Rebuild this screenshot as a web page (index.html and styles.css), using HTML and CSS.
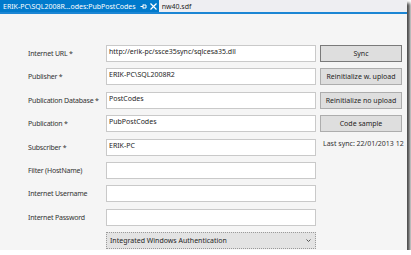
FILE: index.html
```html
<!DOCTYPE html>
<html lang="en">
<head>
    <meta charset="UTF-8">
    <title>Sync settings</title>
    <link rel="stylesheet" href="styles.css">
</head>
<body>
    <div class="window">
        <div class="tabbar">
            <div class="tab active">
                <span class="tab-title">ERIK-PC\SQL2008R...odes:PubPostCodes</span>
                <svg class="tab-icon" width="7" height="7" viewBox="0 0 7 7">
                    <path d="M0.5 3.5H3 M3 1.5V5.5 M3 2H6V5H3" stroke="#fff" stroke-width="1" fill="none"/>
                </svg>
                <svg class="tab-icon" width="7" height="7" viewBox="0 0 7 7">
                    <path d="M0.5 0.5L6.5 6.5 M6.5 0.5L0.5 6.5" stroke="#fff" stroke-width="1.2"/>
                </svg>
            </div>
            <div class="tab">nw40.sdf</div>
        </div>

        <div class="content">
            <div class="form">
                <label>Internet URL *</label>
                <div class="field">http://erik-pc/ssce35sync/sqlcesa35.dll</div>
                <button class="btn default">Sync</button>

                <label>Publisher *</label>
                <div class="field">ERIK-PC\SQL2008R2</div>
                <button class="btn">Reinitialize w. upload</button>

                <label>Publication Database *</label>
                <div class="field">PostCodes</div>
                <button class="btn">Reinitialize no upload</button>

                <label>Publication *</label>
                <div class="field">PubPostCodes</div>
                <button class="btn">Code sample</button>

                <label>Subscriber *</label>
                <div class="field">ERIK-PC</div>
                <div class="status">Last sync: 22/01/2013 12</div>

                <label>Filter (HostName)</label>
                <div class="field"></div>
                <div></div>

                <label>Internet Username</label>
                <div class="field"></div>
                <div></div>

                <label>Internet Password</label>
                <div class="field"></div>
                <div></div>

                <div></div>
                <div class="select">
                    <span>Integrated Windows Authentication</span>
                    <svg class="arrow" width="5" height="3" viewBox="0 0 5 3">
                        <path d="M0.5 0.5L2.5 2.5L4.5 0.5" stroke="#555" stroke-width="1" fill="none"/>
                    </svg>
                </div>
                <div></div>
            </div>
        </div>
    </div>
</body>
</html>
```

FILE: styles.css
```css
body {
    margin: 0;
    background-color: #ffffff;
    font-family: "Noto Sans", "Open Sans", sans-serif;
    font-size: 7px;
    color: #1e1e1e;
}

.window {
    width: 407px;
    height: 250px;
    background-color: #f5f5f5;
    box-shadow: 3px 3px 3px #4a4a4a;
    overflow: hidden;
}

.tabbar {
    display: flex;
    height: 12px;
    background-color: #eeeef2;
    border-bottom: 2px solid #1c86d4;
}

.tab {
    display: flex;
    align-items: center;
    padding: 0 3px;
    color: #1e1e1e;
}

.tab.active {
    background-color: #007acc;
    color: #ffffff;
    padding: 0 2px 0 3px;
    gap: 3px;
}

.tab-title {
    margin-right: 1px;
}

.content {
    padding: 31px 0 0 28px;
}

.form {
    display: grid;
    grid-template-columns: 74px 210px 82px;
    grid-auto-rows: 17px;
    column-gap: 4px;
    row-gap: 6.4px;
    align-items: center;
}

label {
    color: #333333;
    white-space: nowrap;
    letter-spacing: -0.2px;
}

.field {
    height: 15px;
    background-color: #ffffff;
    border: 1px solid #c9c9c9;
    padding: 0 2px;
    line-height: 11px;
}

.btn {
    height: 17px;
    padding: 0;
    font-family: inherit;
    font-size: 7px;
    color: #1e1e1e;
    background-color: #dedede;
    border: 1px solid #adadad;
}

.btn.default {
    border-color: #7a7a7a;
}

.status {
    align-self: start;
    padding-left: 3px;
    white-space: nowrap;
    color: #333333;
}

.select {
    height: 15px;
    display: flex;
    justify-content: space-between;
    align-items: center;
    padding: 0 4px 0 3px;
    background-color: #e3e3e3;
    border: 1px dotted #9a9a9a;
}

.arrow {
    display: block;
}
```
